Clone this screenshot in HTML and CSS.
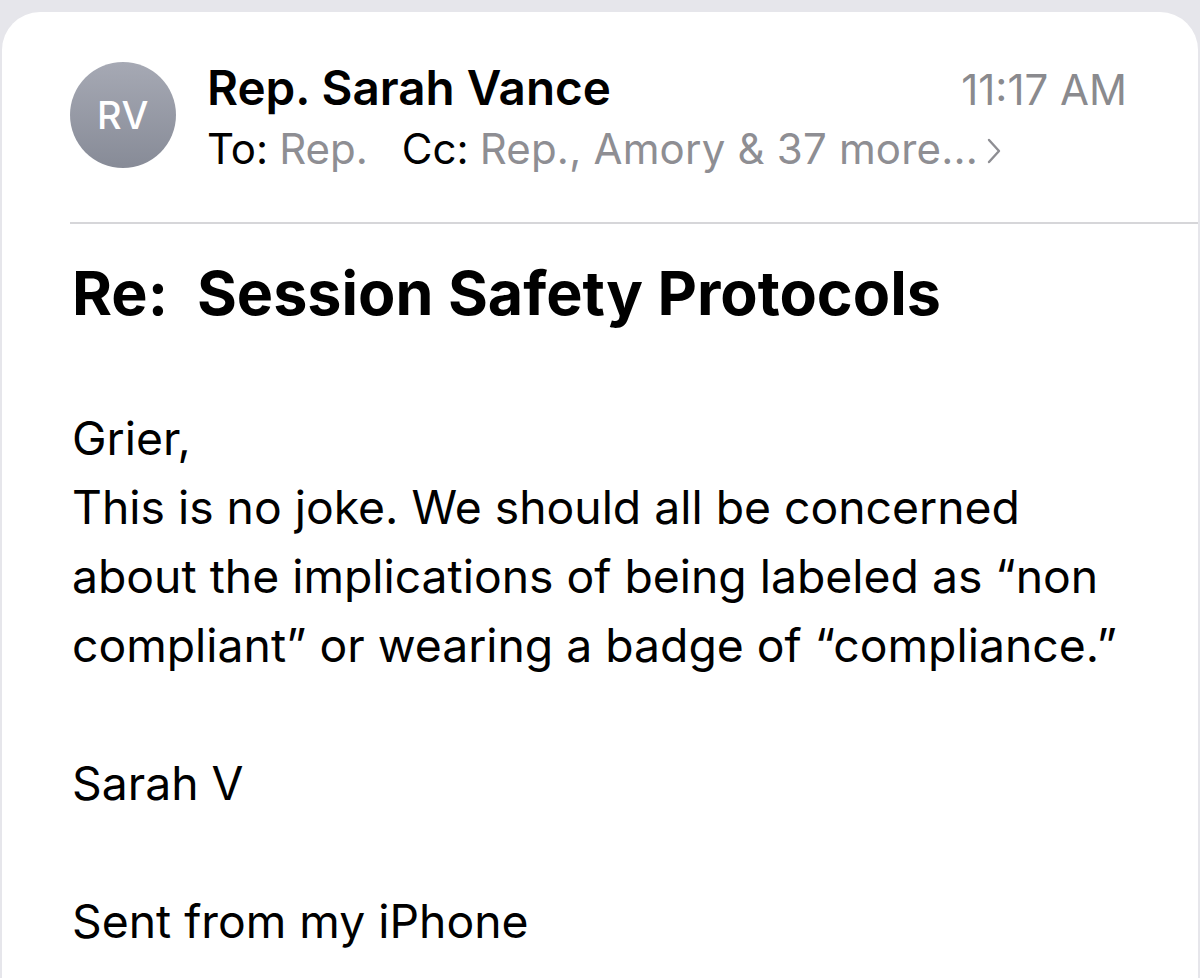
FILE: index.html
```html
<!DOCTYPE html>
<html lang="en">
<head>
<meta charset="utf-8">
<title>Re: Session Safety Protocols</title>
<link rel="stylesheet" href="styles.css">
</head>
<body>
<div class="card">
  <header class="header">
    <div class="avatar">RV</div>
    <div class="meta">
      <div class="row-top">
        <span class="sender">Rep. Sarah Vance</span>
        <span class="time">11:17 AM</span>
      </div>
      <div class="recipients">
        <span class="label">To:</span> <span class="val">Rep.</span><span class="gap"></span><span class="label">Cc:</span> <span class="val">Rep., Amory &amp; 37 more...</span>
        <svg class="chev" width="14" height="26" viewBox="0 0 14 26"><path d="M2 2 L12 13 L2 24" fill="none" stroke="#8e8e93" stroke-width="2.4" stroke-linecap="round" stroke-linejoin="round"/></svg>
      </div>
    </div>
  </header>
  <div class="divider"></div>
  <h1 class="subject">Re:&nbsp; Session Safety Protocols</h1>
  <div class="body">
    <p>Grier,<br>This is no joke. We should all be concerned<br>about the implications of being labeled as “non<br>compliant” or wearing a badge of “compliance.”</p>
    <p>Sarah V</p>
    <p>Sent from my iPhone</p>
  </div>
</div>
</body>
</html>
```
FILE: styles.css
```css
html, body {
  margin: 0;
  padding: 0;
  height: 100%;
}
body {
  background: #e6e6eb;
  font-family: Inter, "Noto Sans", "Liberation Sans", sans-serif;
  color: #000;
  overflow: hidden;
}
.card {
  margin: 12px 2px 0 2px;
  background: #fff;
  border-radius: 38px 38px 0 0;
  height: calc(100% - 12px);
  box-sizing: border-box;
}
.header {
  display: flex;
  align-items: flex-start;
  padding: 50px 0 0 68px;
}
.avatar {
  width: 106px;
  height: 106px;
  border-radius: 50%;
  background: linear-gradient(180deg, #a6a9b4 0%, #878b97 100%);
  color: #fff;
  font-size: 38px;
  font-weight: 500;
  display: flex;
  align-items: center;
  justify-content: center;
  letter-spacing: 0.5px;
  flex: none;
}
.meta {
  margin-left: 31px;
  flex: 1;
  padding-right: 71px;
}
.row-top {
  display: flex;
  justify-content: space-between;
  align-items: baseline;
  line-height: 57px;
  margin-top: -3px;
}
.sender {
  font-size: 47.6px;
  font-weight: 600;
}
.time {
  font-size: 42px;
  color: #8a8a8e;
}
.recipients {
  font-size: 42px;
  line-height: 57px;
  white-space: nowrap;
  display: flex;
  align-items: center;
  margin-top: 2px;
}
.recipients .label { color: #000; margin-right: 11px; }
.recipients .val { color: #8e8e93; }
.recipients .gap { display: inline-block; width: 34px; }
.recipients .val:last-of-type { letter-spacing: 0.2px; }
.chev { margin-left: 9px; margin-top: 4px; }
.divider {
  margin: 45px 0 0 68px;
  height: 2px;
  background: #d6d6d9;
}
.subject {
  margin: 33px 0 0 70px;
  font-size: 61px;
  font-weight: 700;
  line-height: 72px;
}
.body {
  margin: 75px 0 0 70px;
  font-size: 46.3px;
  line-height: 69px;
}
.body p {
  margin: 0 0 69px 0;
}
```
